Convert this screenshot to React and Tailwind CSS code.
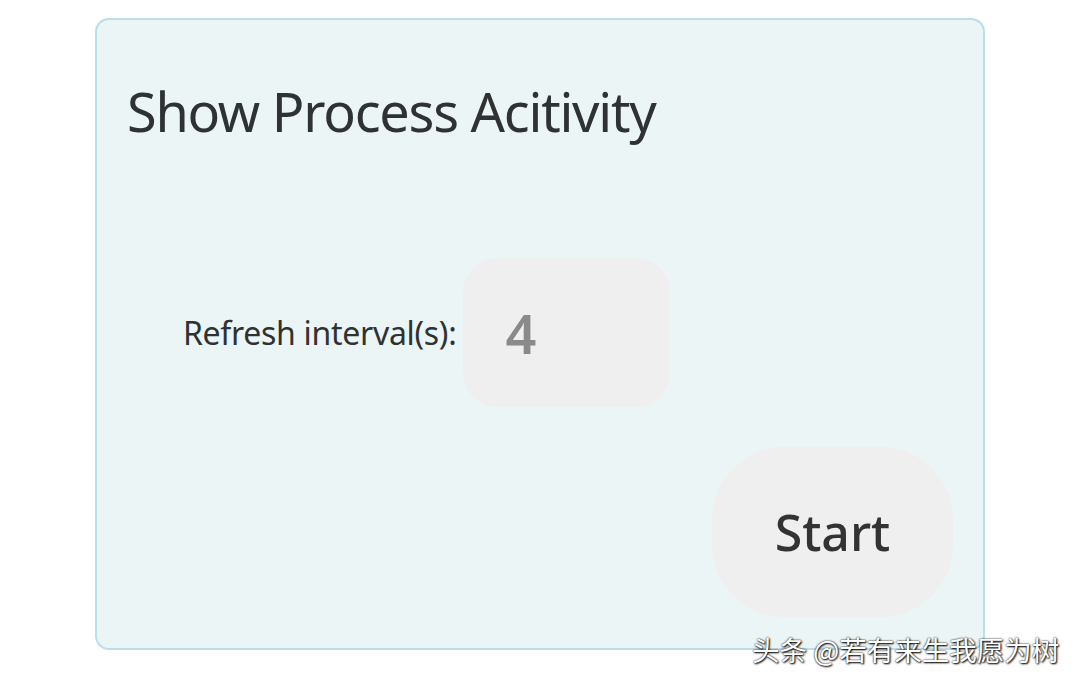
export default function App() {
  return (
    <div className="relative w-[1080px] h-[684px] bg-white overflow-hidden">
      <div className="ml-[95px] mt-[18px] w-[890px] h-[632px] border-2 border-[#bcdeea] rounded-[14px] bg-[#ecf5f6] flex flex-col font-['Noto_Sans','Liberation_Sans',sans-serif]">
        <h1 className="ml-[30px] mt-[64px] text-[54px] leading-[54px] tracking-[-1.25px] text-[#2e3233] font-normal whitespace-nowrap">
          Show Process Acitivity
        </h1>
        <div className="flex items-center ml-[86px] mt-[120px]">
          <span className="text-[32px] leading-[40px] tracking-[-0.3px] text-[#2e3233] whitespace-nowrap">Refresh interval(s):</span>
          <div className="ml-[7px] w-[207px] h-[149px] rounded-[34px] bg-[#efefef] flex items-center pl-[42px]">
            <span className="text-[54px] leading-[54px] font-semibold text-[#8a8a8a]">4</span>
          </div>
        </div>
        <div className="flex justify-end mt-[40px] mr-[30px]">
          <button className="w-[241px] h-[170px] rounded-[72px] bg-[#efefef] flex items-center justify-center text-[50px] font-medium text-[#333333]">
            Start
          </button>
        </div>
      </div>
      <div className="absolute left-[752px] top-[631px] text-[27.5px] leading-[36px] text-white font-['Noto_Sans_CJK_SC',sans-serif] [text-shadow:0_0_2px_#000,1px_1px_2px_#000] whitespace-nowrap">
        头条 @若有来生我愿为树
      </div>
    </div>
  );
}
